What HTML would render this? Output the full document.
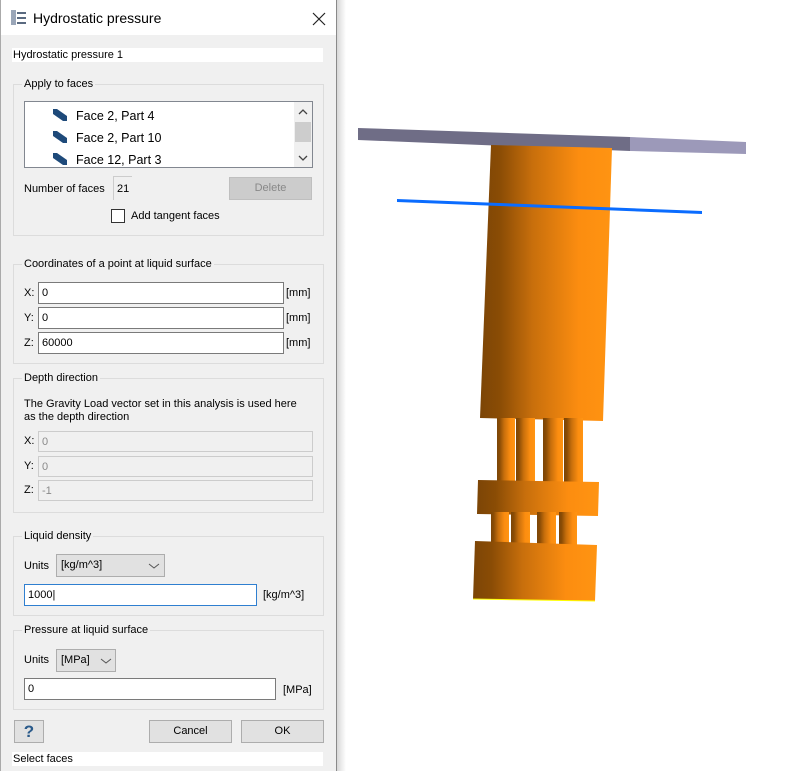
<!DOCTYPE html>
<html><head><meta charset="utf-8"><style>
*{margin:0;padding:0;box-sizing:border-box}
body{width:785px;height:771px;background:#fff;position:relative;overflow:hidden;font-family:"Liberation Sans",sans-serif;font-size:11px;color:#000}
.a{position:absolute}
#dlg{left:0;top:0;width:337px;height:771px;background:#f0f0f0;box-shadow:inset 1px 0 0 #aaa,inset -1px 0 0 #8a8a8a}
#tb{left:1px;top:0;width:335px;height:35px;background:#fff}
.grp{position:absolute;border:1px solid #dcdcdc;left:13px;width:311px}
.gl{position:absolute;background:#f0f0f0;padding:0 2px;font-size:11px;left:8px;top:-7px;line-height:13px}
.in{position:absolute;background:#fff;border:1px solid #7a7a7a;font-size:11px;padding-left:3px;display:flex;align-items:center}
.dis{position:absolute;background:#f0f0f0;border:1px solid #ccc;color:#8a8a8a;font-size:11px;padding-left:3px;display:flex;align-items:center}
.lb{position:absolute;font-size:11px;line-height:13px}
.btn{position:absolute;background:#e1e1e1;border:1px solid #adadad;text-align:center;font-size:11px;line-height:21px}
.cb{position:absolute;background:#e1e1e1;border:1px solid #adadad;font-size:11px;line-height:21px;padding-left:4px}
</style></head><body>
<svg class="a" style="left:337px;top:0" width="448" height="771">
<defs>
<linearGradient id="sh" x1="0" x2="1"><stop offset="0" stop-color="#d8d8d8"/><stop offset="1" stop-color="#fff"/></linearGradient>
<linearGradient id="og" x1="0" x2="1"><stop offset="0" stop-color="#7c4506"/><stop offset=".15" stop-color="#8a4c05"/><stop offset=".4" stop-color="#c86f0c"/><stop offset=".75" stop-color="#fc8d10"/><stop offset="1" stop-color="#ff9412"/></linearGradient>
</defs>
<rect x="0" y="0" width="9" height="771" fill="url(#sh)"/>
<g transform="translate(-337,0)">
<polygon points="358,128 630,137 630,151 358,140" fill="#6f6d86"/>
<polygon points="630,137 746,142 746,154 630,151" fill="#9c99b9"/>
<polygon points="491,145 612,148 603,421 480,418" fill="url(#og)"/>
<polygon points="397,199 702,211 702,214 397,202" fill="#0a6cff"/>
<rect x="497" y="418" width="18" height="65" fill="url(#og)"/>
<rect x="516" y="418" width="19" height="65" fill="url(#og)"/>
<rect x="543" y="418" width="20" height="65" fill="url(#og)"/>
<rect x="564" y="418" width="19" height="65" fill="url(#og)"/>
<polygon points="478,480 599,482 598,516 477,514" fill="url(#og)"/>
<rect x="491" y="512" width="18" height="34" fill="url(#og)"/>
<rect x="511" y="512" width="19" height="34" fill="url(#og)"/>
<rect x="537" y="512" width="19" height="34" fill="url(#og)"/>
<rect x="559" y="512" width="18" height="34" fill="url(#og)"/>
<polygon points="475,541 597,545 595,601 473,599" fill="url(#og)"/>
<line x1="473" y1="599" x2="595" y2="601" stroke="#ff0" stroke-width="1"/>
</g>
</svg>
<div id="dlg" class="a">
<div id="tb" class="a">
<svg class="a" style="left:9px;top:9px" width="18" height="18"><g fill="#5a6a80"><rect x="1" y="1" width="5" height="15" fill="#9aa6b8"/><rect x="7" y="3" width="9" height="2"/><rect x="7" y="8" width="9" height="2"/><rect x="7" y="13" width="9" height="2"/></g></svg>
<div class="a" style="left:32px;top:9px;font-size:14px;line-height:18px">Hydrostatic pressure</div>
<svg class="a" style="left:311px;top:12px" width="14" height="14"><path d="M1 1L13 13M13 1L1 13" stroke="#222" stroke-width="1.2"/></svg>
</div>
<div class="a" style="left:12px;top:48px;width:311px;height:14px;background:#fff;line-height:14px;padding-left:1px">Hydrostatic pressure 1</div>

<div class="grp" style="top:84px;height:152px"><div class="gl">Apply to faces</div></div>
<div class="a" style="left:24px;top:101px;width:289px;height:67px;background:#fff;border:1px solid #828790">
 <div class="a" style="left:269px;top:0;width:18px;height:65px;background:#f0f0f0"></div>
 <div class="a" style="left:270px;top:20px;width:16px;height:20px;background:#cdcdcd"></div>
 <svg class="a" style="left:273px;top:6px" width="10" height="8"><path d="M1 6L5 2L9 6" stroke="#444" fill="none" stroke-width="1.3"/></svg>
 <svg class="a" style="left:273px;top:52px" width="10" height="8"><path d="M1 2L5 6L9 2" stroke="#444" fill="none" stroke-width="1.3"/></svg>
 <svg class="a" style="left:28px;top:7px" width="14" height="60"><g fill="#1e4a7a"><polygon points="0,0 4,0 14,7 14,12 10,12 0,5"/><polygon points="0,22 4,22 14,29 14,34 10,34 0,27"/><polygon points="0,44 4,44 14,51 14,56 10,56 0,49"/></g></svg>
 <div class="a" style="left:51px;top:6px;font-size:12.5px;line-height:16px">Face 2, Part 4</div>
 <div class="a" style="left:51px;top:28px;font-size:12.5px;line-height:16px">Face 2, Part 10</div>
 <div class="a" style="left:51px;top:50px;font-size:12.5px;line-height:16px">Face 12, Part 3</div>
</div>
<div class="lb" style="left:24px;top:183px">Number of faces</div>
<div class="a" style="left:113px;top:176px;width:19px;height:24px;border-left:1px solid #ccc;border-top:1px solid #ccc;padding:6px 0 0 3px;font-size:11px">21</div>
<div class="btn" style="left:229px;top:177px;width:83px;height:23px;background:#ccc;border-color:#bfbfbf;color:#888">Delete</div>
<div class="a" style="left:111px;top:209px;width:14px;height:14px;background:#fff;border:1px solid #333"></div>
<div class="lb" style="left:131px;top:210px">Add tangent faces</div>

<div class="grp" style="top:264px;height:100px"><div class="gl">Coordinates of a point at liquid surface</div></div>
<div class="lb" style="left:24px;top:287px">X:</div><div class="in" style="left:38px;top:282px;width:246px;height:22px">0</div><div class="lb" style="left:286px;top:287px">[mm]</div>
<div class="lb" style="left:24px;top:312px">Y:</div><div class="in" style="left:38px;top:307px;width:246px;height:22px">0</div><div class="lb" style="left:286px;top:312px">[mm]</div>
<div class="lb" style="left:24px;top:337px">Z:</div><div class="in" style="left:38px;top:332px;width:246px;height:22px">60000</div><div class="lb" style="left:286px;top:337px">[mm]</div>

<div class="grp" style="top:378px;height:135px"><div class="gl">Depth direction</div></div>
<div class="lb" style="left:24px;top:398px;line-height:13px">The Gravity Load vector set in this analysis is used here<br>as the depth direction</div>
<div class="lb" style="left:24px;top:435px">X:</div><div class="dis" style="left:38px;top:431px;width:275px;height:21px">0</div>
<div class="lb" style="left:24px;top:460px">Y:</div><div class="dis" style="left:38px;top:456px;width:275px;height:21px">0</div>
<div class="lb" style="left:24px;top:484px">Z:</div><div class="dis" style="left:38px;top:480px;width:275px;height:21px">-1</div>

<div class="grp" style="top:536px;height:80px"><div class="gl">Liquid density</div></div>
<div class="lb" style="left:24px;top:560px">Units</div>
<div class="cb" style="left:56px;top:554px;width:109px;height:23px">[kg/m^3]<svg class="a" style="left:91px;top:7px" width="12" height="8"><path d="M1 2L6 6L11 2" stroke="#555" fill="none"/></svg></div>
<div class="in" style="left:24px;top:584px;width:233px;height:22px;border-color:#2f7fd0">1000|</div>
<div class="lb" style="left:263px;top:589px">[kg/m^3]</div>

<div class="grp" style="top:630px;height:80px"><div class="gl">Pressure at liquid surface</div></div>
<div class="lb" style="left:24px;top:654px">Units</div>
<div class="cb" style="left:56px;top:649px;width:60px;height:23px">[MPa]<svg class="a" style="left:43px;top:7px" width="12" height="8"><path d="M1 2L6 6L11 2" stroke="#555" fill="none"/></svg></div>
<div class="in" style="left:24px;top:678px;width:252px;height:22px">0</div>
<div class="lb" style="left:283px;top:684px">[MPa]</div>

<div class="btn" style="left:14px;top:720px;width:30px;height:23px;font-size:17px;font-weight:bold;color:#2a5a8a;line-height:21px">?</div>
<div class="btn" style="left:149px;top:720px;width:83px;height:23px">Cancel</div>
<div class="btn" style="left:241px;top:720px;width:83px;height:23px">OK</div>
<div class="a" style="left:12px;top:752px;width:311px;height:14px;background:#fff;line-height:14px;padding-left:1px">Select faces</div>
</div>
</body></html>
